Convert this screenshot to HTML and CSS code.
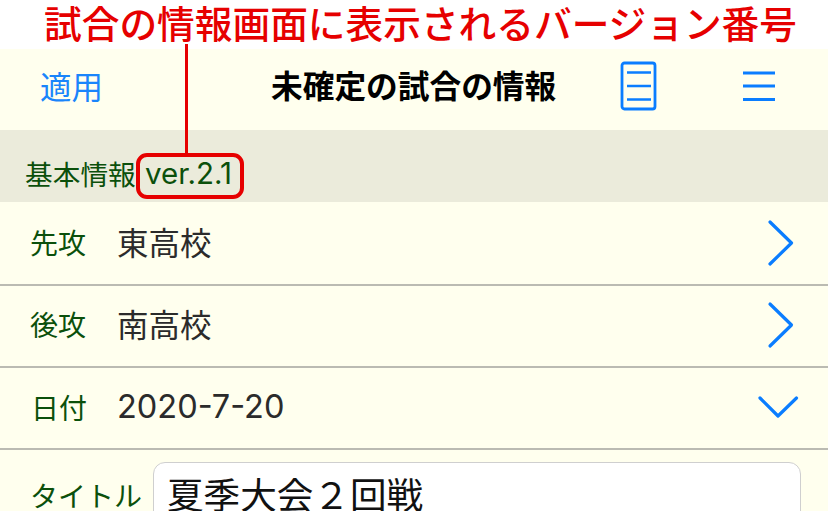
FILE: index.html
```html
<!DOCTYPE html>
<html lang="ja">
<head>
<meta charset="utf-8">
<title>未確定の試合の情報</title>
<link rel="stylesheet" href="styles.css">
</head>
<body>
<div class="page">
  <div class="caption">試合の情報画面に表示されるバージョン番号</div>
  <header class="nav">
    <span class="apply">適用</span>
    <h1 class="title">未確定の試合の情報</h1>
    <svg class="doc-icon" width="38" height="50" viewBox="0 0 38 50" fill="none" stroke="#0a7dff">
      <rect x="2" y="2" width="33" height="46" rx="2.5" stroke-width="2.8"/>
      <path d="M7 11.5H31M7 25H31M7 38.500H31" stroke-width="2.600"/>
    </svg>
    <svg class="menu-icon" width="32" height="30" viewBox="0 0 32 30" fill="none" stroke="#0a7dff" stroke-width="2.800">
      <path d="M0 2H32M0 15H32M0 28.500H32"/>
    </svg>
  </header>
  <section class="section-head">
    <span class="section-name">基本情報</span>
    <span class="version">ver.2.1</span>
  </section>
  <div class="row row-first">
    <span class="label">先攻</span>
    <span class="value">東高校</span>
    <svg class="chev" width="28" height="48" viewBox="0 0 28 48" fill="none" stroke="#0a7dff" stroke-width="3.200" stroke-linecap="round" stroke-linejoin="round"><path d="M4 3L25.500 24L4 45"/></svg>
  </div>
  <div class="row">
    <span class="label">後攻</span>
    <span class="value">南高校</span>
    <svg class="chev" width="28" height="48" viewBox="0 0 28 48" fill="none" stroke="#0a7dff" stroke-width="3.200" stroke-linecap="round" stroke-linejoin="round"><path d="M4 3L25.500 24L4 45"/></svg>
  </div>
  <div class="row">
    <span class="label label-date">日付</span>
    <span class="value date">2020-7-20</span>
    <svg class="chev-down" width="42" height="24" viewBox="0 0 42 24" fill="none" stroke="#0a7dff" stroke-width="3.200" stroke-linecap="round" stroke-linejoin="round"><path d="M3 3L21 21L39.500 3"/></svg>
  </div>
  <div class="row-input">
    <span class="label">タイトル</span>
    <div class="input">夏季大会２回戦</div>
  </div>
  <div class="callout-line"></div>
  <div class="callout-box"></div>
</div>
</body>
</html>
```
FILE: styles.css
```css
* { box-sizing: border-box; }
html, body { margin: 0; padding: 0; background: #fff; }
body { font-family: "Noto Sans CJK JP", "Noto Sans", sans-serif; }
.page { position: relative; width: 828px; height: 511px; overflow: hidden; padding-top: 49px; background: #ffffee; }
.caption { position: absolute; left: 0; top: 0; width: 828px; height: 49px; background: #fff; color: #e60000; font-size: 37.700px; font-weight: 500; line-height: 43px; white-space: nowrap; padding-left: 44px; }
.nav { position: relative; height: 81px; display: flex; align-items: center; padding-left: 40px; background: #ffffee; }
.apply { color: #1a85fb; font-size: 31.500px; width: 231px; line-height: 1; position: relative; top: -4px; }
.title { margin: 0; color: #000; font-size: 31.700px; font-weight: 700; line-height: 1; width: 349px; position: relative; top: -5px; white-space: nowrap; }
.doc-icon { margin-right: 85px; position: relative; top: -4px; }
.menu-icon { position: relative; top: -4px; }
.section-head { height: 72px; background: #ebebdb; display: flex; align-items: flex-end; padding: 0 0 9px 25px; color: #0b500b; }
.section-name { font-size: 27.700px; line-height: 40px; width: 120px; }
.version { font-family: "Inter", sans-serif; font-size: 29.500px; line-height: 40px; }
.row { height: 82px; display: flex; align-items: center; padding-left: 30px; padding-bottom: 2px; border-bottom: 2px solid #bbbbb2; }
.row-first { height: 84px; padding-bottom: 0; }
.label { color: #0b500b; font-size: 28px; width: 87px; line-height: 1; flex: none; margin-bottom: 2px; }
.label-date { padding-left: 1px; margin-bottom: 0; }
.value { color: #2b2b2b; font-size: 31.500px; line-height: 1; flex: 1; margin-bottom: 2px; }
.date { font-family: "Inter", sans-serif; font-size: 32.500px; margin-bottom: 0; }
.chev { margin-right: 34px; }
.chev-down { margin-right: 29px; }
.row-input { display: flex; padding: 12px 27px 0 30px; }
.row-input .label { width: 123px; padding-top: 19px; white-space: nowrap; margin-bottom: 0; }
.input { flex: 1; height: 80px; background: #fff; border: 1px solid #cfcfcf; border-radius: 12px; padding: 7px 13px; font-size: 36.600px; line-height: 48px; color: #111; }
.callout-line { position: absolute; left: 185px; top: 44px; width: 3px; height: 112px; background: #e60000; }
.callout-box { position: absolute; left: 136px; top: 153px; width: 108px; height: 46px; border: 4px solid #e60000; border-radius: 11px; }
```
